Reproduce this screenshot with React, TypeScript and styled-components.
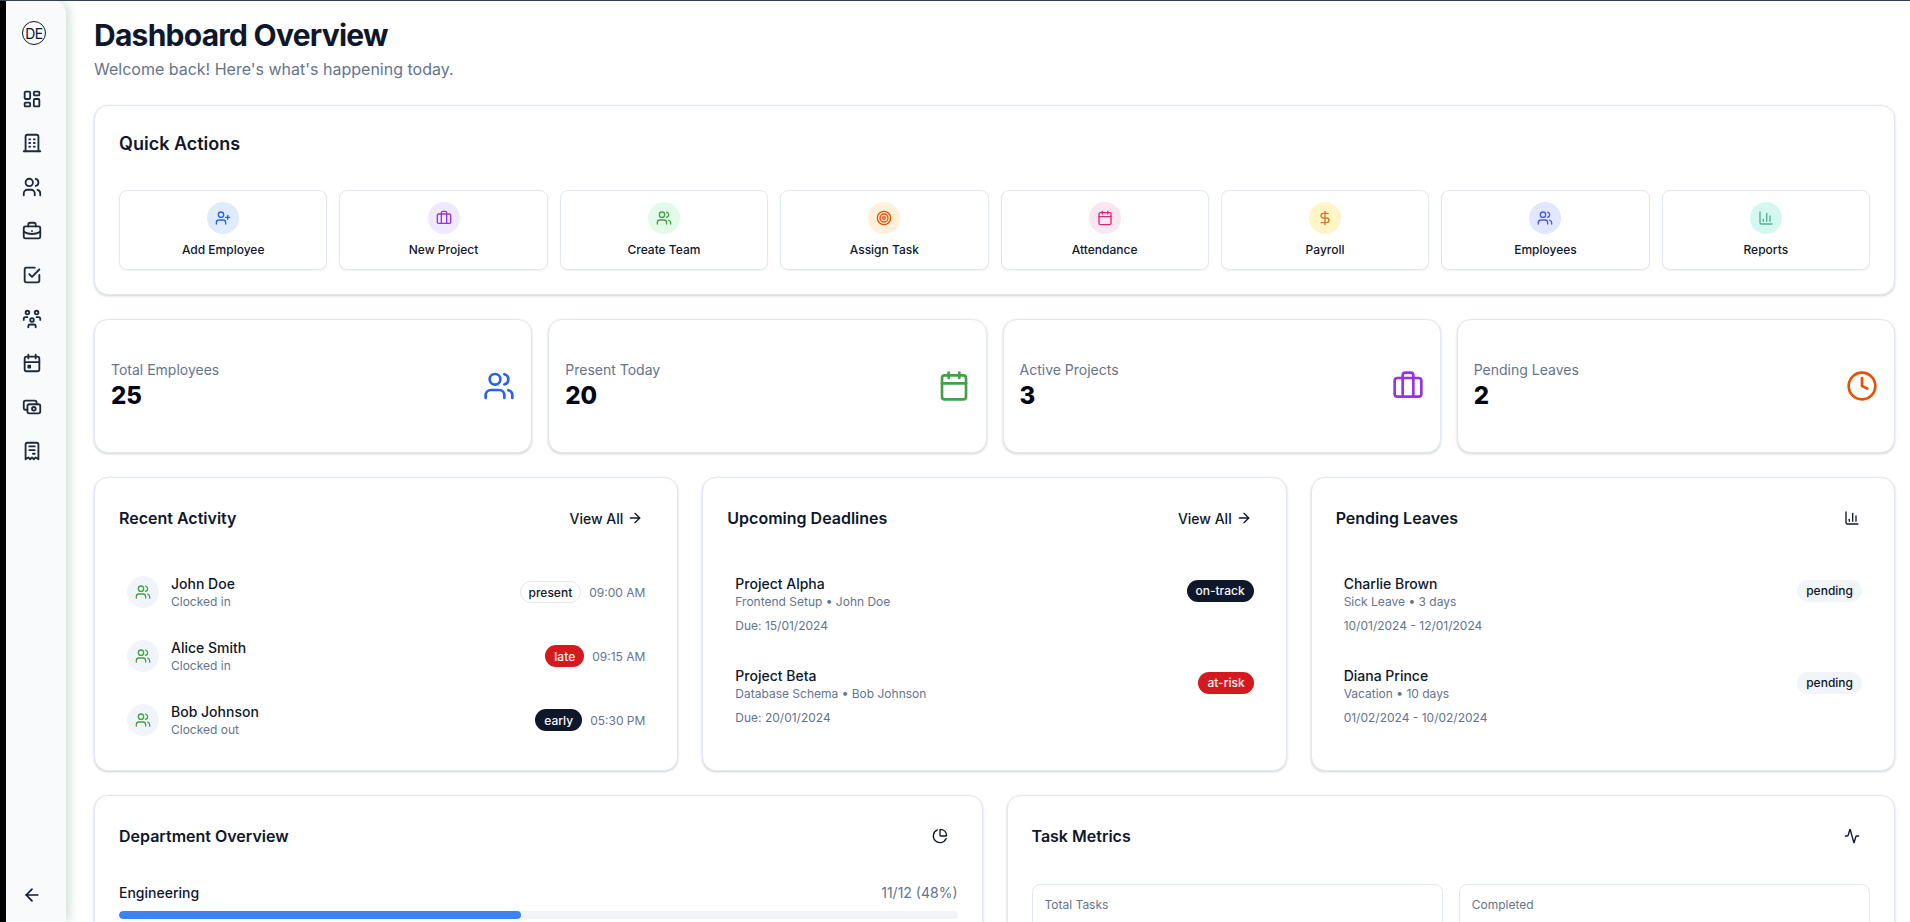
import React from 'react';
import styled, { createGlobalStyle } from 'styled-components';
import {
  Activity,
  ArrowLeft,
  ArrowRight,
  BarChart3,
  Briefcase,
  Calendar,
  Clock,
  DollarSign,
  PieChart,
  Target,
  UserPlus,
  Users,
} from 'lucide-react';
import {
  TbBriefcase,
  TbBuilding,
  TbCalendarEvent,
  TbCash,
  TbCheckbox,
  TbLayoutDashboard,
  TbReceipt,
  TbUsers,
  TbUsersGroup,
} from 'react-icons/tb';

const GlobalStyle = createGlobalStyle`
  * { box-sizing: border-box; }
  html, body { margin: 0; height: 100%; overflow: hidden; background: #000; }
  body { font-family: Inter, "Noto Sans", sans-serif; color: #0f172a; }
`;

const Shell = styled.div`
  display: flex;
  height: 100vh;
  padding-left: 6px;
  border-top: 1px solid #374151;
  background: #fff;
  box-shadow: inset 6px 0 0 #000;
`;

const Sidebar = styled.aside`
  width: 60px;
  flex-shrink: 0;
  display: flex;
  flex-direction: column;
  align-items: center;
  padding-right: 8px;
  background: #f8fafc;
  border-radius: 12px 12px 0 0;
  box-shadow: 4px 0 10px rgba(34, 120, 70, 0.2);
  z-index: 1;
`;

const Logo = styled.div`
  width: 24px;
  height: 24px;
  margin: 20px 0 42px 4px;
  border: 1px solid #0f172a;
  border-radius: 50%;
  display: flex;
  align-items: center;
  justify-content: center;
  font-size: 14px;
  letter-spacing: -0.6px;
`;

const NavList = styled.nav`
  display: flex;
  flex-direction: column;
  align-items: center;
  gap: 20px;
  flex: 1;
  color: #1e293b;
`;

const NavIcon = styled.span`
  display: flex;
  width: 24px;
  height: 24px;
  align-items: center;
  justify-content: center;
  font-size: 22px;
`;

const Collapse = styled.div`
  display: flex;
  height: 20px;
  margin-bottom: 17px;
  color: #0f172a;
`;

const Main = styled.main`
  flex: 1;
  min-width: 0;
  height: 100%;
  overflow: hidden;
  background: #fff;
  padding: 0 15px 0 28px;
  display: flex;
  flex-direction: column;
  gap: 24px;
`;

const Header = styled.header`
  padding-top: 16px;
`;

const Title = styled.h1`
  margin: 0;
  font-size: 30px;
  line-height: 36px;
  font-weight: 700;
  color: #0f172a;
  letter-spacing: -0.75px;
`;

const Subtitle = styled.p`
  margin: 4px 0 0;
  font-size: 16px;
  line-height: 24px;
  color: #64748b;
`;

const Card = styled.section`
  background: #fff;
  border: 1px solid #e2e8f0;
  border-radius: 14px;
  box-shadow: 0 1px 3px rgba(15, 23, 42, 0.12), 0 1px 2px rgba(15, 23, 42, 0.08);
  flex-shrink: 0;
`;

const QuickCard = styled(Card)`
  padding: 24px;
  height: 190px;
`;

const CardHeader = styled.div`
  display: flex;
  align-items: center;
  justify-content: space-between;
  height: 28px;
`;

const SectionHeader = styled(CardHeader)`
  height: 32px;
`;

const CardTitle = styled.h2`
  margin: 0;
  font-size: 18px;
  line-height: 28px;
  font-weight: 600;
  color: #0f172a;
`;

const SectionTitle = styled(CardTitle)`
  font-size: 16px;
`;

const QuickGrid = styled.div`
  display: grid;
  grid-template-columns: repeat(8, 1fr);
  gap: 12px;
  margin-top: 32px;
`;

const QuickButton = styled.button`
  height: 80px;
  padding: 11px 0 0;
  background: #fff;
  border: 1px solid #e2e8f0;
  border-radius: 8px;
  box-shadow: 0 1px 2px rgba(15, 23, 42, 0.06);
  display: flex;
  flex-direction: column;
  align-items: center;
  gap: 8px;
  font-family: inherit;
  font-size: 12px;
  line-height: 16px;
  font-weight: 500;
  color: #0f172a;
`;

const QuickIcon = styled.span<{ $bg: string; $fg: string }>`
  width: 32px;
  height: 32px;
  border-radius: 50%;
  display: flex;
  align-items: center;
  justify-content: center;
  background: ${(p) => p.$bg};
  color: ${(p) => p.$fg};
`;

const StatsRow = styled.div`
  display: grid;
  grid-template-columns: repeat(4, 1fr);
  gap: 16px;
`;

const StatCard = styled(Card)`
  height: 134px;
  padding: 0 16px;
  display: flex;
  align-items: center;
  justify-content: space-between;
`;

const StatLabel = styled.div`
  font-size: 14px;
  line-height: 20px;
  color: #64748b;
`;

const StatValue = styled.div`
  font-size: 24px;
  line-height: 32px;
  font-weight: 800;
  color: #020617;
`;

const StatIcon = styled.span<{ $fg: string }>`
  display: flex;
  color: ${(p) => p.$fg};
`;

const ThreeCols = styled.div`
  display: grid;
  grid-template-columns: repeat(3, 1fr);
  gap: 24px;
`;

const ListCard = styled(Card)`
  height: 294px;
  padding: 24px;
`;

const ViewAll = styled.button`
  border: 0;
  background: none;
  padding: 0 10px 0 0;
  height: 36px;
  display: flex;
  align-items: center;
  gap: 4px;
  font-family: inherit;
  font-size: 14px;
  font-weight: 500;
  color: #0f172a;
`;

const IconAction = styled.span`
  display: flex;
  width: 36px;
  height: 36px;
  align-items: center;
  justify-content: center;
  color: #0f172a;
`;

const RowList = styled.div`
  display: flex;
  flex-direction: column;
  gap: 16px;
  margin-top: 34px;
`;

const ActivityRow = styled.div`
  display: flex;
  align-items: center;
  justify-content: space-between;
  padding: 0 8px;
  height: 48px;
`;

const RowLeft = styled.div`
  display: flex;
  align-items: center;
  gap: 12px;
`;

const Avatar = styled.span`
  width: 32px;
  height: 32px;
  border-radius: 50%;
  background: #f1f5f9;
  color: #43a047;
  display: flex;
  align-items: center;
  justify-content: center;
`;

const RowName = styled.div`
  font-size: 14px;
  line-height: 20px;
  font-weight: 500;
  color: #0f172a;
`;

const RowSub = styled.div`
  font-size: 12px;
  line-height: 16px;
  color: #64748b;
`;

const RowRight = styled.div`
  display: flex;
  align-items: center;
  gap: 8px;
`;

const Time = styled.span`
  font-size: 12px;
  color: #64748b;
`;

const Badge = styled.span<{ $kind: 'outline' | 'dark' | 'red' | 'soft' }>`
  display: inline-flex;
  height: 22px;
  align-items: center;
  padding: 0 8px;
  border-radius: 999px;
  font-size: 12px;
  font-weight: 500;
  border: 1px solid ${(p) => (p.$kind === 'outline' ? '#e2e8f0' : 'transparent')};
  background: ${(p) =>
    p.$kind === 'dark' ? '#0f172a' : p.$kind === 'red' ? '#d6191f' : p.$kind === 'soft' ? '#f1f5f9' : '#fff'};
  color: ${(p) => (p.$kind === 'dark' || p.$kind === 'red' ? '#f8fafc' : '#0f172a')};
`;

const DeadlineList = styled.div`
  display: flex;
  flex-direction: column;
  gap: 16px;
  margin-top: 32px;
`;

const DeadlineRow = styled.div`
  display: flex;
  align-items: flex-start;
  justify-content: space-between;
  padding: 8px 8px 0;
  height: 76px;
`;

const DeadlineDue = styled.div`
  margin-top: 8px;
  font-size: 12px;
  line-height: 16px;
  color: #64748b;
`;

const BadgeSlot = styled.div`
  padding-top: 5px;
`;

const TwoCols = styled.div`
  display: grid;
  grid-template-columns: repeat(2, 1fr);
  gap: 24px;
`;

const BottomCard = styled(Card)`
  height: 300px;
  padding: 24px;
`;

const DeptHead = styled.div`
  display: flex;
  justify-content: space-between;
  align-items: center;
  margin-top: 31px;
  font-size: 14px;
  line-height: 20px;
  font-weight: 500;
`;

const DeptCount = styled.span`
  color: #64748b;
  font-weight: 400;
`;

const Track = styled.div`
  height: 8px;
  margin-top: 8px;
  border-radius: 999px;
  background: #f1f5f9;
  overflow: hidden;
`;

const Fill = styled.div`
  height: 100%;
  border-radius: 999px;
  background: #3b82f6;
`;

const MetricGrid = styled.div`
  display: grid;
  grid-template-columns: repeat(2, 1fr);
  gap: 16px;
  margin-top: 32px;
`;

const MetricCard = styled.div`
  height: 90px;
  padding: 12px;
  border: 1px solid #e2e8f0;
  border-radius: 8px;
  font-size: 12px;
  line-height: 16px;
  color: #64748b;
`;

const navItems = [
  TbLayoutDashboard,
  TbBuilding,
  TbUsers,
  TbBriefcase,
  TbCheckbox,
  TbUsersGroup,
  TbCalendarEvent,
  TbCash,
  TbReceipt,
];

const quickActions = [
  { label: 'Add Employee', Icon: UserPlus, bg: '#e0ebff', fg: '#2563eb' },
  { label: 'New Project', Icon: Briefcase, bg: '#f0e8ff', fg: '#9333ea' },
  { label: 'Create Team', Icon: Users, bg: '#e3fae8', fg: '#43a047' },
  { label: 'Assign Task', Icon: Target, bg: '#fff0da', fg: '#e65100' },
  { label: 'Attendance', Icon: Calendar, bg: '#f9e6f0', fg: '#db2777' },
  { label: 'Payroll', Icon: DollarSign, bg: '#fff5c6', fg: '#cc7a2a' },
  { label: 'Employees', Icon: Users, bg: '#e0e7ff', fg: '#4f56e5' },
  { label: 'Reports', Icon: BarChart3, bg: '#d4f8f0', fg: '#4db08c' },
];

const stats = [
  { label: 'Total Employees', value: '25', Icon: Users, fg: '#2563eb' },
  { label: 'Present Today', value: '20', Icon: Calendar, fg: '#43a047' },
  { label: 'Active Projects', value: '3', Icon: Briefcase, fg: '#9333ea' },
  { label: 'Pending Leaves', value: '2', Icon: Clock, fg: '#e65100' },
];

const activity = [
  { name: 'John Doe', sub: 'Clocked in', badge: 'present', kind: 'outline', time: '09:00 AM' },
  { name: 'Alice Smith', sub: 'Clocked in', badge: 'late', kind: 'red', time: '09:15 AM' },
  { name: 'Bob Johnson', sub: 'Clocked out', badge: 'early', kind: 'dark', time: '05:30 PM' },
] as const;

const deadlines = [
  { name: 'Project Alpha', sub: 'Frontend Setup • John Doe', due: 'Due: 15/01/2024', badge: 'on-track', kind: 'dark' },
  { name: 'Project Beta', sub: 'Database Schema • Bob Johnson', due: 'Due: 20/01/2024', badge: 'at-risk', kind: 'red' },
] as const;

const leaves = [
  { name: 'Charlie Brown', sub: 'Sick Leave • 3 days', due: '10/01/2024 - 12/01/2024', badge: 'pending', kind: 'soft' },
  { name: 'Diana Prince', sub: 'Vacation • 10 days', due: '01/02/2024 - 10/02/2024', badge: 'pending', kind: 'soft' },
] as const;

function DatedRows({ rows }: { rows: typeof deadlines | typeof leaves }) {
  return (
    <DeadlineList>
      {rows.map((row) => (
        <DeadlineRow key={row.name}>
          <div>
            <RowName>{row.name}</RowName>
            <RowSub>{row.sub}</RowSub>
            <DeadlineDue>{row.due}</DeadlineDue>
          </div>
          <BadgeSlot>
            <Badge $kind={row.kind}>{row.badge}</Badge>
          </BadgeSlot>
        </DeadlineRow>
      ))}
    </DeadlineList>
  );
}

export default function App() {
  return (
    <>
      <GlobalStyle />
      <Shell>
        <Sidebar>
          <Logo>DE</Logo>
          <NavList>
            {navItems.map((Icon, i) => (
              <NavIcon key={i}>
                <Icon />
              </NavIcon>
            ))}
          </NavList>
          <Collapse>
            <ArrowLeft size={20} />
          </Collapse>
        </Sidebar>
        <Main>
          <Header>
            <Title>Dashboard Overview</Title>
            <Subtitle>Welcome back! Here's what's happening today.</Subtitle>
          </Header>

          <QuickCard>
            <CardHeader>
              <CardTitle>Quick Actions</CardTitle>
            </CardHeader>
            <QuickGrid>
              {quickActions.map(({ label, Icon, bg, fg }) => (
                <QuickButton key={label}>
                  <QuickIcon $bg={bg} $fg={fg}>
                    <Icon size={16} />
                  </QuickIcon>
                  {label}
                </QuickButton>
              ))}
            </QuickGrid>
          </QuickCard>

          <StatsRow>
            {stats.map(({ label, value, Icon, fg }) => (
              <StatCard key={label}>
                <div>
                  <StatLabel>{label}</StatLabel>
                  <StatValue>{value}</StatValue>
                </div>
                <StatIcon $fg={fg}>
                  <Icon size={32} />
                </StatIcon>
              </StatCard>
            ))}
          </StatsRow>

          <ThreeCols>
            <ListCard>
              <SectionHeader>
                <SectionTitle>Recent Activity</SectionTitle>
                <ViewAll>
                  View All
                  <ArrowRight size={16} />
                </ViewAll>
              </SectionHeader>
              <RowList>
                {activity.map((row) => (
                  <ActivityRow key={row.name}>
                    <RowLeft>
                      <Avatar>
                        <Users size={16} />
                      </Avatar>
                      <div>
                        <RowName>{row.name}</RowName>
                        <RowSub>{row.sub}</RowSub>
                      </div>
                    </RowLeft>
                    <RowRight>
                      <Badge $kind={row.kind}>{row.badge}</Badge>
                      <Time>{row.time}</Time>
                    </RowRight>
                  </ActivityRow>
                ))}
              </RowList>
            </ListCard>

            <ListCard>
              <SectionHeader>
                <SectionTitle>Upcoming Deadlines</SectionTitle>
                <ViewAll>
                  View All
                  <ArrowRight size={16} />
                </ViewAll>
              </SectionHeader>
              <DatedRows rows={deadlines} />
            </ListCard>

            <ListCard>
              <SectionHeader>
                <SectionTitle>Pending Leaves</SectionTitle>
                <IconAction>
                  <BarChart3 size={16} />
                </IconAction>
              </SectionHeader>
              <DatedRows rows={leaves} />
            </ListCard>
          </ThreeCols>

          <TwoCols>
            <BottomCard>
              <SectionHeader>
                <SectionTitle>Department Overview</SectionTitle>
                <IconAction>
                  <PieChart size={16} />
                </IconAction>
              </SectionHeader>
              <DeptHead>
                Engineering
                <DeptCount>11/12 (48%)</DeptCount>
              </DeptHead>
              <Track>
                <Fill style={{ width: '48%' }} />
              </Track>
            </BottomCard>
            <BottomCard>
              <SectionHeader>
                <SectionTitle>Task Metrics</SectionTitle>
                <IconAction>
                  <Activity size={16} />
                </IconAction>
              </SectionHeader>
              <MetricGrid>
                <MetricCard>Total Tasks</MetricCard>
                <MetricCard>Completed</MetricCard>
              </MetricGrid>
            </BottomCard>
          </TwoCols>
        </Main>
      </Shell>
    </>
  );
}
